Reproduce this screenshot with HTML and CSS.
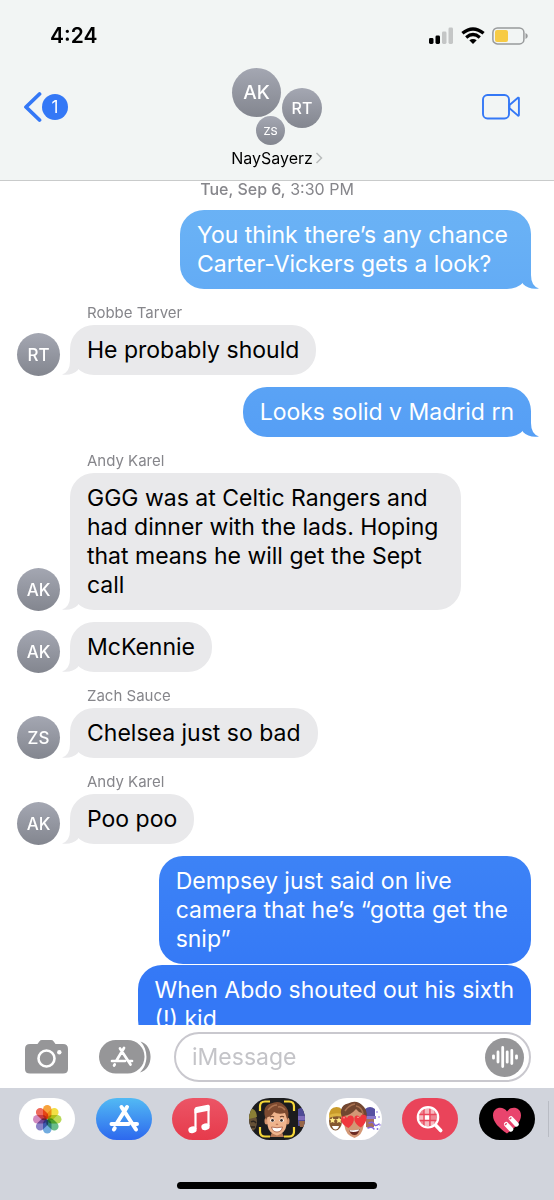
FILE: index.html
```html
<!DOCTYPE html>
<html lang="en">
<head>
<meta charset="utf-8">
<meta name="viewport" content="width=device-width, initial-scale=1">
<title>NaySayerz</title>
<link rel="stylesheet" href="styles.css">
</head>
<body>
<header class="top">
  <div class="status">
    <span class="status__time">4:24</span>
    <div class="status__icons">
      <svg width="26" height="18" viewBox="0 0 26 18" aria-hidden="true">
        <rect x="1" y="11" width="4.500" height="6" rx="1.4"/><rect x="7.500" y="8.500" width="4.500" height="8.500" rx="1.4"/>
        <rect x="14" y="4.500" width="4.500" height="12.500" rx="1.4" fill="#c4c6c6"/><rect x="20.500" y="0.500" width="4.500" height="16.500" rx="1.400" fill="#c4c6c6"/>
      </svg>
      <svg width="24" height="18" viewBox="0 0 24 18" fill="none" stroke="#000" stroke-width="3.300" aria-hidden="true">
        <path d="M1.400 6.300Q12-2.400 22.600 6.300"/><path d="M5.200 10.400Q12 4.700 18.800 10.400"/>
        <path d="M8.300 13.300Q12 10.600 15.700 13.300L12 17Z" fill="#000" stroke="none"/>
      </svg>
      <svg width="36" height="18" viewBox="0 0 36 18" aria-hidden="true">
        <rect x="0.900" y="0.900" width="31" height="16" rx="4.500" fill="none" stroke="#989a9b" stroke-width="1.500"/>
        <rect x="3" y="3" width="13" height="12" rx="2" fill="#f7cb45"/><path d="M33.500 6v6q2.300-.8 2.300-3t-2.300-3" fill="#989a9b"/>
      </svg>
    </div>
  </div>
  <div class="bar">
    <button class="back" aria-label="Back, 1 unread">
      <svg width="19" height="32" viewBox="0 0 19 32" fill="none" stroke="#3478f6" stroke-width="3.800" stroke-linecap="round" stroke-linejoin="round" aria-hidden="true"><path d="M16.500 3 3 16l13.500 13"/></svg>
      <span class="back__count">1</span>
    </button>
    <button class="group">
      <span class="cluster" aria-hidden="true">
        <span class="avatar cluster__a">AK</span><span class="avatar cluster__b">RT</span><span class="avatar cluster__c">ZS</span>
      </span>
      <span class="group__name">NaySayerz<svg width="8" height="12" viewBox="0 0 8 12" fill="none" stroke="#b9bcbc" stroke-width="1.500" aria-hidden="true"><path d="M1.500 1 6.500 6l-5 5"/></svg></span>
    </button>
    <button class="video" aria-label="FaceTime">
      <svg width="38" height="26" viewBox="0 0 38 26" fill="none" stroke="#3478f6" stroke-width="1.900" stroke-linejoin="round" aria-hidden="true"><rect x="1" y="1" width="26" height="23.500" rx="4.500"/><path d="M27.500 11 36 3.700q.9-.4.900.8v16.300q0 1.200-.9.800l-8.500-7.300Z"/></svg>
    </button>
  </div>
</header>

<main class="thread">
  <p class="stamp"><b>Tue, Sep 6,</b> 3:30 PM</p>
  <div class="row row--sent"><p class="bubble bubble--multi bubble--tail">You think there’s any chance<br>Carter-Vickers gets a look?</p></div>
  <p class="sender">Robbe Tarver</p>
  <div class="row"><span class="avatar">RT</span><p class="bubble bubble--tail">He probably should</p></div>
  <div class="row row--sent row--gap"><p class="bubble bubble--tail">Looks solid v Madrid rn</p></div>
  <p class="sender">Andy Karel</p>
  <div class="row"><span class="avatar">AK</span><p class="bubble bubble--multi bubble--tail">GGG was at Celtic Rangers and<br>had dinner with the lads. Hoping<br>that means he will get the Sept<br>call</p></div>
  <div class="row row--gap"><span class="avatar">AK</span><p class="bubble bubble--tail">McKennie</p></div>
  <p class="sender">Zach Sauce</p>
  <div class="row"><span class="avatar">ZS</span><p class="bubble bubble--tail">Chelsea just so bad</p></div>
  <p class="sender">Andy Karel</p>
  <div class="row"><span class="avatar">AK</span><p class="bubble bubble--tail">Poo poo</p></div>
  <div class="row row--sent row--gap"><p class="bubble bubble--multi">Dempsey just said on live<br>camera that he’s “gotta get the<br>snip”</p></div>
  <div class="row row--sent row--tight"><p class="bubble">When Abdo shouted out his sixth<br>(!) kid</p></div>
</main>

<form class="compose">
  <button type="button" aria-label="Camera">
    <svg width="43" height="34" viewBox="0 0 43 34" aria-hidden="true"><path d="M5 4h7.500l1.800-2.600Q15.300 0 17 0h9q1.700 0 2.700 1.400L30.500 4H38q5 0 5 5v20q0 4.500-5 4.500H5Q0 33.500 0 29V9q0-5 5-5Z" fill="#969698"/><circle cx="21.500" cy="18.500" r="8" fill="none" stroke="#fff" stroke-width="2.600"/><circle cx="34.300" cy="12.300" r="2.200" fill="#fff"/></svg>
  </button>
  <button type="button" aria-label="Apps">
    <svg width="52" height="34" viewBox="0 0 52 34" aria-hidden="true"><rect width="45.500" height="33.500" rx="16.750" fill="#969698"/><path d="M41.500 1.500C55 5 55 29 41 32.500 49.500 24 49.500 10 41.500 1.500Z" fill="#969698"/><g fill="none" stroke="#fff" stroke-width="2.700" stroke-linecap="round"><path d="M21 8.500l10.500 16M25 8l-7.500 12.500M13 21h13M29.500 21H33M15.700 24.500l-.6 1"/></g></svg>
  </button>
  <div class="field">
    <input type="text" placeholder="iMessage" aria-label="Message">
    <button type="button" class="voice" aria-label="Record audio">
      <svg width="28" height="24" viewBox="0 0 28 24" stroke="#fff" stroke-width="2.800" stroke-linecap="round" aria-hidden="true"><path d="M2.500 10.800v2.400M7 7v10M11.700 2.500v19M16.200 6.800v10.400M20.800 5.500v13M25.500 10.800v2.400"/></svg>
    </button>
  </div>
</form>

<nav class="apps" aria-label="iMessage apps">
  <div class="apps__strip">
  <div class="apps__list">
    <button class="app app--photos" aria-label="Photos">
      <svg viewBox="0 0 56 42" aria-hidden="true">
        <g class="petals">
          <rect x="24" y="7" width="8.500" height="14" rx="4.250" fill="#f7a23c"/>
          <rect x="24" y="7" width="8.500" height="14" rx="4.250" fill="#f3df45" transform="rotate(45 28.250 21.250)"/>
          <rect x="24" y="7" width="8.500" height="14" rx="4.250" fill="#b8d957" transform="rotate(90 28.250 21.250)"/>
          <rect x="24" y="7" width="8.500" height="14" rx="4.250" fill="#69bd8a" transform="rotate(135 28.250 21.250)"/>
          <rect x="24" y="7" width="8.500" height="14" rx="4.250" fill="#72acdf" transform="rotate(180 28.250 21.250)"/>
          <rect x="24" y="7" width="8.500" height="14" rx="4.250" fill="#8b83c8" transform="rotate(225 28.250 21.250)"/>
          <rect x="24" y="7" width="8.500" height="14" rx="4.250" fill="#d18bc0" transform="rotate(270 28.250 21.250)"/>
          <rect x="24" y="7" width="8.500" height="14" rx="4.250" fill="#ee6b5d" transform="rotate(315 28.250 21.250)"/>
        </g>
      </svg>
    </button>
    <button class="app app--store" aria-label="App Store">
      <svg viewBox="0 0 56 42" fill="none" stroke="#fff" stroke-width="4" stroke-linecap="round" aria-hidden="true"><path d="M25.500 9 40 31.500M31 9 21 25M15.500 26h17M38.500 26H41M18.700 30.200l-.8 1.300"/></svg>
    </button>
    <button class="app app--music" aria-label="Music">
      <svg viewBox="0 0 56 42" aria-hidden="true"><path d="M23.500 11v20M36.500 8v20" stroke="#fff" stroke-width="2.200"/><path d="M22.500 11q0-1.700 1.800-2l11.500-2.300q1.800-.3 1.800 1.300v4.500l-15.100 3Z" fill="#fff"/><ellipse cx="20.500" cy="31.800" rx="4.200" ry="3.300" fill="#fff" transform="rotate(-15 20.500 31.800)"/><ellipse cx="33.500" cy="28.800" rx="4.200" ry="3.300" fill="#fff" transform="rotate(-15 33.500 28.800)"/></svg>
    </button>
    <button class="app app--memoji" aria-label="Memoji camera">
      <svg viewBox="0 0 56 42" aria-hidden="true">
        <ellipse cx="3" cy="24" rx="5" ry="9" fill="#665237"/><path d="M0 11q7-2 8 8L0 21Z" fill="#8a7f35"/><path d="M2 24q3-2 5 1M2 29h4" stroke="#2c251e" stroke-width="1.500" fill="none"/>
        <path d="M49 11q4-2 7-1v18h-7Z" fill="#4f4a96"/><path d="M49 18h7v4h-7Z" fill="#7f6bb9"/><path d="M50 23h6v6h-5Z" fill="#986748"/>
        <path d="M24 32h8l3 7H21Z" fill="#b97a58"/>
        <ellipse cx="17.500" cy="23" rx="2" ry="3.500" fill="#d6956f"/><ellipse cx="38.500" cy="23" rx="2" ry="3.500" fill="#d6956f"/>
        <path d="M18 16q0-8 10-8t10 8l-.5 11q-1 8-9.500 10.500-8.500-2.500-9.500-10.500Z" fill="#efb48d"/>
        <path d="M17 22Q12 8 22 5.500q9-4.500 15 3.500 4 5 1.500 13L36 15q-7 2-11-1-3 5-6.500 5Z" fill="#7d4a30"/><path d="M19 12q4-5 9-5M29 9q4-1 7 3" stroke="#ac7350" stroke-width="1.500" fill="none"/>
        <path d="M21 19q2-1.500 4 0M31 19q2-1.500 4 0" stroke="#6b412b" stroke-width="1.200" fill="none"/>
        <ellipse cx="23.300" cy="22.300" rx="2.100" ry="1.900" fill="#fff"/><ellipse cx="32.700" cy="22.300" rx="2.100" ry="1.900" fill="#fff"/><circle cx="23.500" cy="22.400" r="1.400" fill="#3a2b25"/><circle cx="32.500" cy="22.400" r="1.400" fill="#3a2b25"/>
        <path d="M27 26q1 1 2 0" stroke="#c07b5a" stroke-width="1.300" fill="none"/><path d="M22.500 29q5.500 1.500 11 0-1 5-5.500 5t-5.500-5Z" fill="#fff" stroke="#a55a43" stroke-width=".8"/>
        <path d="M21 3.500h-5q-5 0-5 5v4.500M35 3.500h5q5 0 5 5v4.500M21 38.500h-5q-5 0-5-5V29M35 38.500h5q5 0 5-5V29" fill="none" stroke="#f5d638" stroke-width="2.200"/>
      </svg>
    </button>
    <button class="app app--stickers" aria-label="Memoji stickers">
      <svg viewBox="0 0 56 42" aria-hidden="true">
        <ellipse cx="9.500" cy="23" rx="6.500" ry="9.500" fill="#84572f"/><path d="M3 19Q3 9 10.500 9q6.500 0 7.500 9-8-3-15 1Z" fill="#c99a2a"/><path d="M3 17q6-3 14-1v3q-8-2-14 1Z" fill="#ddb443"/>
        <path d="m6.500 19 .9 2.100 2.300.2-1.700 1.500.5 2.300-2-1.200-2 1.200.5-2.300-1.700-1.500 2.300-.2ZM13 19l.9 2.100 2.300.2-1.700 1.500.5 2.300-2-1.200-2 1.200.5-2.300-1.700-1.500 2.300-.2Z" fill="#ffe98a"/><path d="M6 28h7q-1 3.500-3.500 3.500T6 28Z" fill="#fff"/>
        <path d="M39 11q5-4 10 0v10H39Z" fill="#5750a2"/><path d="M39 18h11v3H39Z" fill="#8d79cb"/><path d="M40 21h8v8q-4 2-8 0Z" fill="#a8705c"/>
        <path d="M43 25q4-2 5 1t5 0M42 30q4-2 6 1" fill="none" stroke="#8265dd" stroke-width="1.500" stroke-linecap="round"/><g fill="#8265dd"><circle cx="51" cy="14" r=".8"/><circle cx="53" cy="19" r=".8"/><circle cx="51.500" cy="31" r=".9"/><circle cx="54" cy="27" r=".8"/></g>
        <path d="M17.500 18q0-10 10.500-10t10.500 10l-1 10q-1 9-9 12-9-3-10-12Z" fill="#d39775"/>
        <path d="M17 23Q11 8 22 5.500q9-5 16 3.500 5 6 1 14l-3-8q-4-1-6-4-5 6-12 7Z" fill="#714630"/><path d="M19 13q4-6 10-7M30 8q6 1 7 8" stroke="#a8704f" stroke-width="1.500" fill="none"/>
        <path d="M22.500 30Q15.500 27 15 21.500q0-3.500 3-3.500 2 0 3 2 1-3 4-2.500 3.500.8 2.800 5-.8 4-5.300 7.500Z" fill="#f0373d"/><path d="M35 29.500q-5-2.500-6.500-7-.8-4.500 2.200-5 2.300-.2 3.300 2 .8-3 3.500-3 3.500.3 3 4.500-.7 4.500-5.500 8.500Z" fill="#f0373d"/><path d="M17 20q1-.8 2 0M31 19.500q1-.8 2 0" stroke="#ff9b9a" fill="none"/>
        <path d="M23 32q5.500 1 10.500-1-1 6-5 6t-5.500-5Z" fill="#6b2a22"/><path d="M23.500 32q5 .8 9.500-.8l-.5 1.800q-4 1.500-8.500.6Z" fill="#fff"/>
      </svg>
    </button>
    <button class="app app--images" aria-label="Images">
      <svg viewBox="0 0 56 42" aria-hidden="true"><circle cx="26" cy="19.300" r="10" fill="#ee8592"/><path d="M22 10h5v6h-5ZM17 17h5v6h-5ZM28 23h4v5h-4ZM22 23h5v5h-5ZM28 11h4v5h-4Z" fill="#f6b9c0"/><path d="M22.500 17h5v5h-5Z" fill="#fff"/><path d="M22 10v19M28 10v19M17 16.500h18M17 22.500h18" stroke="#ea445a" stroke-width="1.300"/><circle cx="26" cy="19.300" r="10.200" fill="none" stroke="#fff" stroke-width="2.200"/><path d="m34 27.500 4.700 5" stroke="#fff" stroke-width="3.600" stroke-linecap="round"/></svg>
    </button>
    <button class="app app--touch" aria-label="Digital Touch">
      <svg viewBox="0 0 56 42" aria-hidden="true"><path d="M28 35.500C20 30 14 24 14 17.500 14 9 24 7.500 28 13.500c4-6 14-4.500 14 4C42 24 36 30 28 35.500Z" fill="#e9446d"/><g stroke="#fff" stroke-width="4.600" stroke-linecap="round"><path d="m27.300 26.300 4.700 5M32 20.500l5.500 5.800"/></g><path d="m26.400 26.600.9-.9M31 20.800l.9-.9" stroke="#e9446d" stroke-width="1.400" stroke-linecap="round"/></svg>
    </button>
  </div>
  <span class="apps__divider"></span>
  </div>
  <div class="home"></div>
</nav>
</body>
</html>
```
FILE: styles.css
```css
* { box-sizing: border-box; }
body {
  margin: 0;
  height: 100vh;
  display: flex;
  flex-direction: column;
  background: #fff;
  color: #000;
  font-family: Inter, "Liberation Sans", sans-serif;
  font-size: 23px;
}
p { margin: 0; }
svg { display: block; flex: none; }
button {
  border: 0;
  padding: 0;
  background: none;
  color: inherit;
  font: inherit;
}

.top {
  flex: none;
  background: #f2f5f4;
  border-bottom: 1px solid #c9cbcb;
}
.status {
  display: flex;
  justify-content: space-between;
  align-items: center;
  height: 68px;
  padding: 3px 26px 0 50px;
}
.status__time { font-size: 21px; font-weight: 600; }
.status__icons { display: flex; gap: 7px; }
.bar {
  display: grid;
  grid-template-columns: 1fr auto 1fr;
  align-items: start;
  height: 112px;
  padding: 0 34px 0 23px;
}
.back { display: flex; align-items: center; margin-top: 23px; justify-self: start; }
.back__count {
  width: 26px;
  height: 26px;
  border-radius: 50%;
  background: #3478f6;
  color: #fff;
  font-size: 17px;
  line-height: 26px;
}
.group { display: flex; flex-direction: column; align-items: center; margin-left: 11px; }
.cluster { position: relative; width: 90px; height: 78px; }
.group__name {
  display: flex;
  align-items: center;
  gap: 2px;
  font-size: 16px;
  line-height: 24px;
}
.video { justify-self: end; margin-top: 26px; }

.avatar {
  flex: none;
  display: flex;
  align-items: center;
  justify-content: center;
  width: 43px;
  height: 43px;
  border-radius: 50%;
  background: linear-gradient(#a4a7b2, #83868f);
  color: #fff;
  font-size: 17px;
  font-weight: 500;
}
.cluster .avatar { position: absolute; }
.cluster .cluster__a { left: 0; top: 0; width: 49px; height: 49px; font-size: 19px; }
.cluster .cluster__b { right: 0; top: 20px; width: 40px; height: 40px; font-size: 16px; }
.cluster .cluster__c { left: 24px; top: 48px; width: 29px; height: 29px; font-size: 11px; }

.thread {
  flex: 1 1 0;
  min-height: 0;
  overflow: hidden;
  margin-top: -4px;
  padding: 4px 23px 0 17px;
}
.stamp, .sender { color: #86868b; font-size: 15px; }
.stamp {
  margin-bottom: 13px;
  padding-left: 6px;
  font-size: 16px;
  line-height: 16px;
  text-align: center;
}
.stamp b { font-weight: 500; }
.sender { margin-top: 12px; padding-left: 70px; line-height: 24px; }
.row { display: flex; align-items: flex-end; gap: 10px; }
.row .avatar { margin-bottom: -1px; }
.row--sent { justify-content: flex-end; }
.row--gap { margin-top: 12px; }
.row--tight { margin-top: 1px; }
.bubble {
  position: relative;
  padding: 11px 17px 10px;
  border-radius: 24px;
  background: #e9e9eb;
  line-height: 29px;
  white-space: nowrap;
}
.bubble--multi { padding-right: 23px; }
.row--sent .bubble,
.row--sent .bubble::after {
  background: linear-gradient(#72b9f5 0%, #69b1f5 19%, #57a0f5 35%, #3d83f6 71%, #3478f6 82%) fixed;
  color: #fff;
}
.bubble--tail::after {
  content: "";
  position: absolute;
  bottom: 0;
  left: -8px;
  width: 24px;
  height: 24px;
  background: #e9e9eb;
  clip-path: path("M8 0V10Q8 21 0 23.500Q10 25 16 19L20 0Z");
}
.row--sent .bubble--tail::after {
  left: auto;
  right: -8px;
  clip-path: path("M16 0V10Q16 21 24 23.500Q14 25 8 19L4 0Z");
}

.compose {
  flex: none;
  display: flex;
  align-items: center;
  padding: 7px 23px 6px 25px;
}
.compose > button + button { margin-left: 31px; }
.field {
  flex: 1;
  min-width: 0;
  display: flex;
  align-items: center;
  height: 50px;
  margin-left: 23px;
  padding: 0 5px 0 16px;
  border: 2px solid #c9c8ce;
  border-radius: 25px;
}
.field input {
  flex: 1;
  min-width: 0;
  padding: 0;
  border: 0;
  outline: 0;
  background: none;
  font: inherit;
}
.field input::placeholder { color: #c4c4c8; }
.voice {
  display: flex;
  align-items: center;
  justify-content: center;
  width: 39px;
  height: 39px;
  border-radius: 50%;
  background: #969698;
}

.apps { flex: none; padding-top: 10px; background: #d1d4dc; }
.apps__strip {
  display: flex;
  align-items: center;
  gap: 13px;
  padding: 0 5px 0 19px;
}
.apps__list { flex: 1; display: flex; justify-content: space-between; }
.apps__divider { width: 1px; height: 36px; background: #b9bcc4; }
.app {
  width: 56px;
  height: 42px;
  border-radius: 21px;
  overflow: hidden;
}
.app--photos, .app--stickers { background: #fff; }
.app--store { background: linear-gradient(#52baf4, #2d68ee); }
.app--music { background: linear-gradient(#ec5566, #e63a4b); }
.app--memoji { background: #1c1c1e; }
.app--images { background: #ea445a; }
.app--touch { background: #000; }
.petals rect { mix-blend-mode: multiply; }
.home {
  width: 36%;
  height: 7px;
  margin: 42px auto 11px;
  border-radius: 4px;
  background: #000;
}
```
